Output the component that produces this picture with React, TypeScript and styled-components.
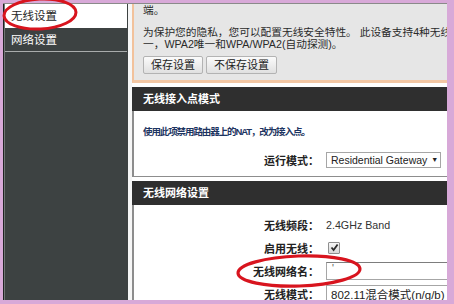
import React from 'react';
import styled, { createGlobalStyle } from 'styled-components';

const Global = createGlobalStyle`
  html, body { margin: 0; padding: 0; width: 454px; height: 304px; overflow: hidden; background: #d8a9d8; }
  body { font-family: "Liberation Sans", "Noto Sans CJK SC", sans-serif; }
  * { box-sizing: border-box; }
`;

const Frame = styled.div`
  position: relative;
  width: 454px;
  height: 304px;
  padding: 3px 7px 4px 3px;
  background: #d8a9d8;
`;

const Inner = styled.div`
  display: flex;
  height: 100%;
  background: #f6f6f6;
  border-top: 1px solid #8a8a8a;
  overflow: hidden;
`;

const Sidebar = styled.nav`
  width: 125px;
  flex: none;
  background: #3d4242;
  border-left: 1px solid #1f2222;
  box-shadow: inset 1px 0 0 #707575;
  padding: 0 1px;
`;

const NavItem = styled.div<{ $active?: boolean }>`
  height: 24px;
  line-height: 24px;
  padding-left: 6px;
  font-size: 11.5px;
  color: ${(p) => (p.$active ? '#1e1e1e' : '#ffffff')};
  background: ${(p) => (p.$active ? '#ffffff' : 'transparent')};
  border-bottom: ${(p) => (p.$active ? 'none' : '1px solid #a9acac')};
`;

const Main = styled.main`
  flex: 1;
  min-width: 0;
  margin-left: 4px;
  display: flex;
  flex-direction: column;
  background: #fff;
  overflow: hidden;
`;

const TopBlock = styled.section`
  background: #e6e6e6;
  border-left: 2px solid #f2c29c;
  border-bottom: 3px solid #f3c7a4;
  padding: 0 0 6px 9px;
  color: #2a2a2a;
  font-size: 10.7px;
  white-space: nowrap;
`;

const TopLine = styled.div`
  line-height: 13px;
`;

const Para = styled.p`
  margin: 9px 0 0;
  line-height: 12px;
`;

const ButtonRow = styled.div`
  display: flex;
  gap: 3px;
  margin-top: 6px;
`;

const Button = styled.button`
  height: 18px;
  padding: 0 7px;
  font-family: inherit;
  font-size: 11px;
  color: #222;
  background: linear-gradient(#fbfbfb, #e0e0e0);
  border: 1px solid #b3b3b3;
  border-radius: 2px;
  line-height: 16px;
`;

const Section = styled.section<{ $gap: number }>`
  margin-top: ${(p) => p.$gap}px;
`;

const Header = styled.h2`
  margin: 0;
  height: 24px;
  line-height: 24px;
  padding-left: 11px;
  background: #2f2f2f;
  color: #fff;
  font-size: 11px;
  font-weight: bold;
`;

const Body = styled.div<{ $pt: number; $pb: number }>`
  background: #fff;
  border-left: 2px solid #8d8d8d;
  border-bottom: 1px solid #8d8d8d;
  padding: ${(p) => p.$pt}px 0 ${(p) => p.$pb}px;
`;

const Desc = styled.div`
  padding-left: 9px;
  line-height: 14px;
  font-size: 9.5px;
  letter-spacing: -1.1px;
  font-weight: bold;
  color: #1d3461;
  margin-bottom: 9px;
`;

const Row = styled.div`
  display: flex;
  align-items: center;
  height: 23px;
  white-space: nowrap;
`;

const Label = styled.div`
  width: 185px;
  flex: none;
  text-align: right;
  font-size: 11px;
  font-weight: bold;
  color: #222;
`;

const Value = styled.div`
  margin-left: 7px;
  font-size: 10.7px;
  color: #333;
  display: flex;
  align-items: center;
`;

const SelectBox = styled.div<{ $w: number; $h: number; $fs: number }>`
  width: ${(p) => p.$w}px;
  height: ${(p) => p.$h}px;
  flex: none;
  border: 1px solid #a6a6a6;
  background: #fff;
  display: flex;
  align-items: center;
  justify-content: space-between;
  padding: 0 5px 0 4px;
  font-size: ${(p) => p.$fs}px;
  color: #222;
`;

const Arrow = styled.span`
  font-size: 7px;
  color: #222;
  margin-left: 4px;
`;

const TextInput = styled.div`
  width: 170px;
  height: 18px;
  flex: none;
  border: 1px solid #a6a6a6;
  border-top-color: #7d7d7d;
  background: #fff;
  padding-left: 5px;
  font-size: 10px;
  line-height: 12px;
  color: #555;
`;

const Check = styled.span`
  width: 12px;
  height: 12px;
  margin-left: 2px;
  border: 1px solid #8f8f8f;
  border-radius: 1px;
  background: linear-gradient(#f6f6f6, #d9d9d9);
  display: flex;
  align-items: center;
  justify-content: center;
`;

const Overlay = styled.svg`
  position: absolute;
  left: 0;
  top: 0;
  pointer-events: none;
`;

export default function App() {
  return (
    <>
      <Global />
      <Frame>
        <Inner>
          <Sidebar>
            <NavItem $active>无线设置</NavItem>
            <NavItem>网络设置</NavItem>
          </Sidebar>
          <Main>
            <TopBlock>
              <TopLine>端。</TopLine>
              <Para>
                为保护您的隐私，您可以配置无线安全特性。 此设备支持4种无线安全模式：WEP，WPA唯
                <br />
                一，WPA2唯一和WPA/WPA2(自动探测)。
              </Para>
              <ButtonRow>
                <Button>保存设置</Button>
                <Button>不保存设置</Button>
              </ButtonRow>
            </TopBlock>

            <Section $gap={4}>
              <Header>无线接入点模式</Header>
              <Body $pt={14} $pb={5}>
                <Desc>使用此项禁用路由器上的NAT，改为接入点。</Desc>
                <Row>
                  <Label>运行模式：</Label>
                  <Value>
                    <SelectBox $w={115} $h={16} $fs={10.5}>
                      <span>Residential Gateway</span>
                      <Arrow>▼</Arrow>
                    </SelectBox>
                  </Value>
                </Row>
              </Body>
            </Section>

            <Section $gap={4}>
              <Header>无线网络设置</Header>
              <Body $pt={8} $pb={0}>
                <Row>
                  <Label>无线频段：</Label>
                  <Value>2.4GHz Band</Value>
                </Row>
                <Row>
                  <Label>启用无线：</Label>
                  <Value>
                    <Check>
                      <svg width="9" height="9" viewBox="0 0 9 9">
                        <path d="M1.5 4.5 L3.6 7 L7.6 1.5" fill="none" stroke="#2a2a2a" strokeWidth="1.8" />
                      </svg>
                    </Check>
                  </Value>
                </Row>
                <Row>
                  <Label>无线网络名：</Label>
                  <Value>
                    <TextInput>'</TextInput>
                  </Value>
                </Row>
                <Row>
                  <Label>无线模式：</Label>
                  <Value>
                    <SelectBox $w={140} $h={18} $fs={11.5}>
                      <span>802.11混合模式(n/g/b)</span>
                      <Arrow>▼</Arrow>
                    </SelectBox>
                  </Value>
                </Row>
              </Body>
            </Section>
          </Main>
        </Inner>
        <Overlay width="454" height="304" viewBox="0 0 454 304">
          <ellipse cx="40" cy="14" rx="36" ry="15" fill="none" stroke="#d8141e" strokeWidth="3" transform="rotate(-3 40 14)" />
          <ellipse cx="299" cy="271" rx="61" ry="15" fill="none" stroke="#d8141e" strokeWidth="3.2" transform="rotate(-2 299 271)" />
        </Overlay>
      </Frame>
    </>
  );
}
